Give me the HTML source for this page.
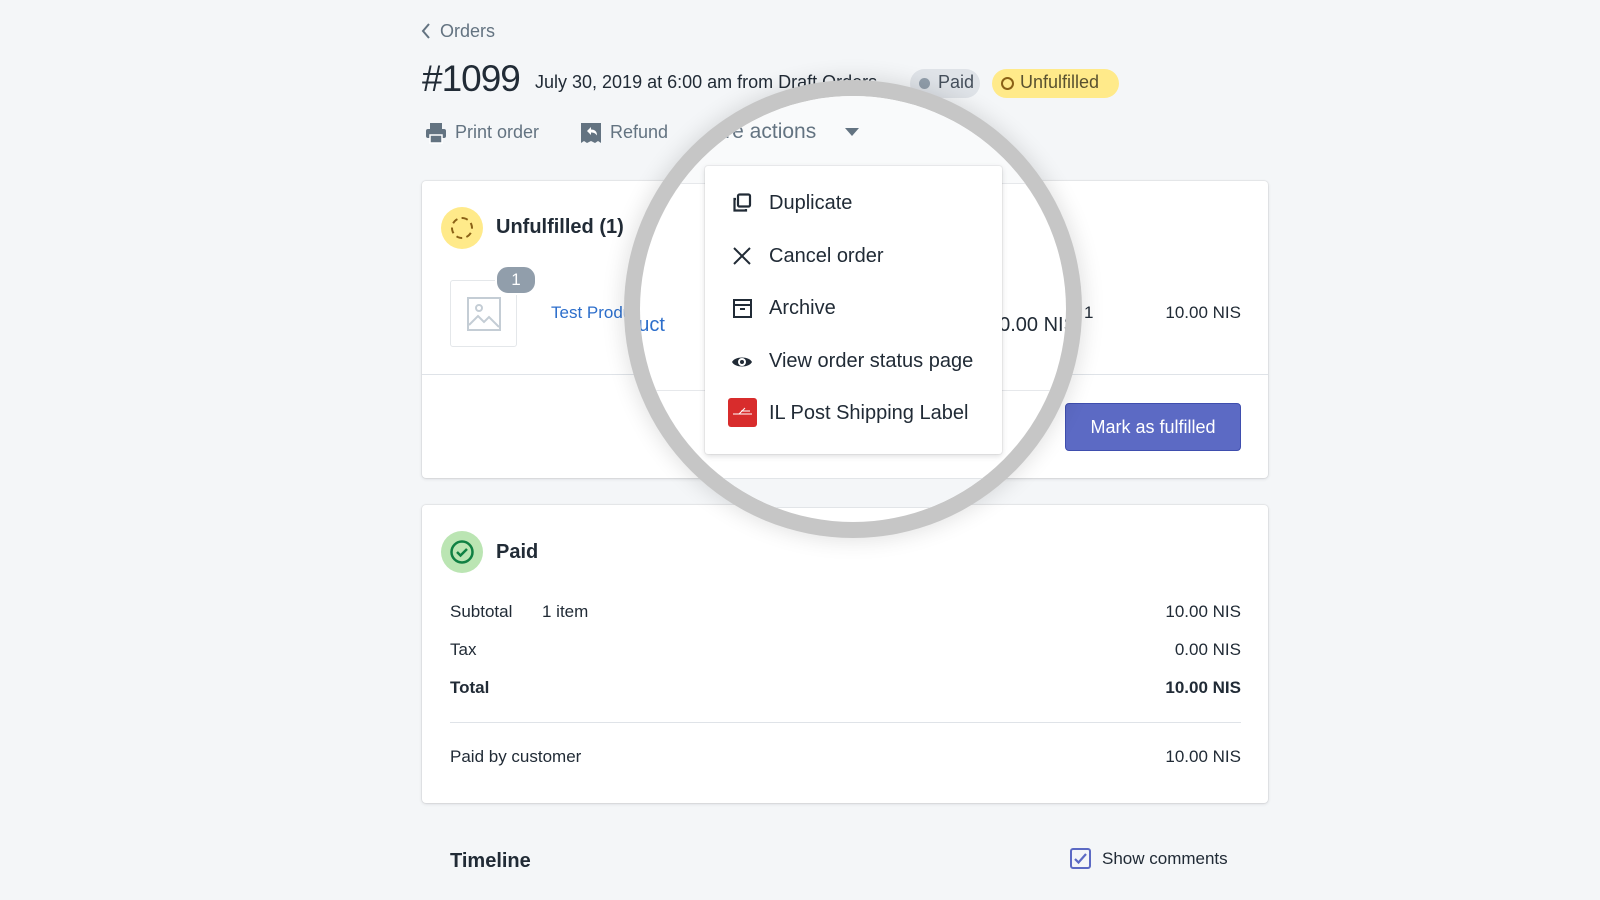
<!DOCTYPE html>
<html><head><meta charset="utf-8"><style>
*{margin:0;padding:0;box-sizing:border-box}
body{width:1600px;height:900px;background:#f4f6f8;font-family:"Liberation Sans",sans-serif;color:#212b36;position:relative;overflow:hidden;font-size:17px}
.a{position:absolute;white-space:nowrap}
.card{position:absolute;left:422px;width:846px;background:#fff;border-radius:4px;box-shadow:0 0 0 1px rgba(63,63,68,.06),0 1px 3px rgba(63,63,68,.15)}
.r{right:359px;text-align:right}
.mag{position:absolute;left:640px;top:96px;width:426px;height:426px;border-radius:50%;overflow:hidden;background:#fff;box-shadow:0 0 0 16px #c6c6c6,0 0 22px 18px rgba(0,0,0,.12)}
.mag .in{position:absolute;left:-640px;top:-96px;width:1600px;height:900px}
.mi{position:absolute;left:769px;font-size:20px;color:#212b36}
</style></head><body>
<svg class="a" style="left:420px;top:22px" width="12" height="18" viewBox="0 0 12 18"><path d="M9 2L3 9l6 7" fill="none" stroke="#637381" stroke-width="2"/></svg>
<div class="a" style="left:440px;top:21px;color:#637381;font-size:18px">Orders</div>
<div class="a" style="left:422px;top:58px;font-size:37px;letter-spacing:-1px">#1099</div>
<div class="a" style="left:535px;top:72px;font-size:18px">July 30, 2019 at 6:00 am from Draft Orders</div>
<div class="a" style="left:910px;top:69px;width:70px;height:29px;border-radius:15px;background:#dfe3e8;color:#454f5b;font-size:18px;padding:3px 0 0 28px">Paid<span style="position:absolute;left:9px;top:9px;width:11px;height:11px;border-radius:50%;background:#919eab"></span></div>
<div class="a" style="left:992px;top:69px;width:127px;height:29px;border-radius:15px;background:#ffea8a;color:#595130;font-size:18px;padding:3px 0 0 28px">Unfulfilled<span style="position:absolute;left:9px;top:8px;width:13px;height:13px;border-radius:50%;border:2px solid #8a6116"></span></div>
<svg class="a" style="left:425px;top:122px" width="22" height="22" viewBox="0 0 22 22"><rect x="5" y="1" width="12" height="6" fill="#637381"/><rect x="1" y="7" width="20" height="9" rx="2" fill="#637381"/><rect x="5" y="13" width="12" height="8" fill="#637381" stroke="#fff" stroke-width="1.5"/></svg>
<div class="a" style="left:455px;top:122px;color:#637381;font-size:18px">Print order</div>
<svg class="a" style="left:580px;top:122px" width="22" height="22" viewBox="0 0 22 22"><path d="M1 1h20v20l-3-2-3 2-4-2-4 2-3-2-3 2z" fill="#637381"/><path d="M7 9l4-4v2.5c4 0 6 2 6 6-1.5-2-3-3-6-3V13z" fill="#fff"/></svg>
<div class="a" style="left:610px;top:122px;color:#637381;font-size:18px">Refund</div>
<div class="card" style="top:181px;height:297px"></div>
<div class="a" style="left:422px;top:374px;width:846px;height:1px;background:#dfe3e8"></div>
<div class="a" style="left:441px;top:207px;width:42px;height:42px;border-radius:50%;background:#ffea8a"></div>
<div class="a" style="left:451px;top:217px;width:22px;height:22px;border-radius:50%;border:2.5px dashed #8a6116"></div>
<div class="a" style="left:496px;top:216px;font-size:20px;font-weight:bold;color:#212b36">Unfulfilled (1)</div>
<div class="a" style="left:450px;top:280px;width:67px;height:67px;border:1px solid #e4e7ea;border-radius:3px"></div>
<svg class="a" style="left:467px;top:297px" width="34" height="34" viewBox="0 0 34 34"><rect x="1" y="1" width="32" height="32" fill="none" stroke="#c4cdd5" stroke-width="2"/><circle cx="12" cy="11" r="3" fill="none" stroke="#c4cdd5" stroke-width="2"/><path d="M2 28l9-9 6 6 5-5 10 10" fill="none" stroke="#c4cdd5" stroke-width="2"/></svg>
<div class="a" style="left:497px;top:267px;width:38px;height:26px;border-radius:13px;background:#919eab;color:#fff;font-size:17px;text-align:center;line-height:26px;border:2px solid #fff;box-sizing:content-box;margin:-2px">1</div>
<div class="a" style="left:551px;top:303px;color:#2c6ecb;font-size:17px">Test Product</div>
<div class="a" style="left:1084px;top:303px">1</div>
<div class="a r" style="top:303px">10.00 NIS</div>
<div class="a" style="left:1065px;top:403px;width:176px;height:48px;border-radius:4px;background:#5c6ac4;border:1px solid #3f4eae;color:#fff;font-size:18px;text-align:center;line-height:46px">Mark as fulfilled</div>
<div class="card" style="top:505px;height:298px"></div>
<div class="a" style="left:441px;top:531px;width:42px;height:42px;border-radius:50%;background:#bbe5b3"></div>
<svg class="a" style="left:449px;top:539px" width="26" height="26" viewBox="0 0 26 26"><circle cx="13" cy="13" r="10.5" fill="none" stroke="#108043" stroke-width="2.5"/><path d="M8 13l3.5 3.5L18 10" fill="none" stroke="#108043" stroke-width="2.5"/></svg>
<div class="a" style="left:496px;top:541px;font-size:20px;font-weight:bold">Paid</div>
<div class="a" style="left:450px;top:602px">Subtotal</div><div class="a" style="left:542px;top:602px">1 item</div><div class="a r" style="top:602px">10.00 NIS</div>
<div class="a" style="left:450px;top:640px">Tax</div><div class="a r" style="top:640px">0.00 NIS</div>
<div class="a" style="left:450px;top:678px;font-weight:bold">Total</div><div class="a r" style="top:678px;font-weight:bold">10.00 NIS</div>
<div class="a" style="left:450px;top:722px;width:791px;height:1px;background:#dfe3e8"></div>
<div class="a" style="left:450px;top:747px">Paid by customer</div><div class="a r" style="top:747px">10.00 NIS</div>
<div class="a" style="left:450px;top:850px;font-size:20px;font-weight:bold">Timeline</div>
<div class="a" style="left:1070px;top:848px;width:21px;height:21px;border:2px solid #5c6ac4;border-radius:3px"></div>
<svg class="a" style="left:1073px;top:851px" width="15" height="15" viewBox="0 0 15 15"><path d="M2 8l3.5 3.5L13 3" fill="none" stroke="#5c6ac4" stroke-width="2.2"/></svg>
<div class="a" style="left:1102px;top:849px">Show comments</div>
<div class="mag"><div class="in">
<div class="a" style="left:600px;top:0;width:600px;height:184px;background:#f9fafb"></div>
<div class="a" style="left:600px;top:183px;width:600px;height:1px;background:#e6e8eb"></div>
<div class="a" style="left:600px;top:390px;width:600px;height:1px;background:#e6e8eb"></div>
<div class="a" style="left:600px;top:478px;width:600px;height:30px;background:#f4f6f8;border-top:1px solid #e2e5e8;border-bottom:1px solid #e2e5e8"></div>
<div class="a" style="left:696px;top:120px;font-size:21px;color:#637381">More actions</div>
<svg class="a" style="left:845px;top:128px" width="14" height="8"><path d="M0 0h14L7 8z" fill="#637381"/></svg>
<div class="a" style="left:596px;top:314px;font-size:20px;color:#2c6ecb">Product</div>
<div class="a" style="left:988px;top:314px;font-size:20px">10.00 NIS</div>
<div class="a" style="left:1083px;top:300px;font-size:18px">1</div>
<div class="a" style="left:1065px;top:403px;width:176px;height:48px;border-radius:4px;background:#5c6ac4"></div>
<div class="a" style="left:705px;top:166px;width:297px;height:288px;background:#fff;border-radius:3px;box-shadow:0 0 0 1px rgba(63,63,68,.06),0 2px 6px rgba(63,63,68,.18)"></div>
<svg class="a" style="left:732px;top:193px" width="20" height="20" viewBox="0 0 20 20"><rect x="6" y="1.5" width="12" height="12" rx="1.5" fill="none" stroke="#212b36" stroke-width="2.2"/><path d="M4 6H2.5v11.5H14V16" fill="none" stroke="#212b36" stroke-width="2.2"/></svg>
<div class="mi" style="top:192px">Duplicate</div>
<svg class="a" style="left:733px;top:247px" width="18" height="18" viewBox="0 0 18 18"><path d="M1 1l16 16M17 1L1 17" stroke="#212b36" stroke-width="2"/></svg>
<div class="mi" style="top:245px">Cancel order</div>
<svg class="a" style="left:733px;top:299px" width="19" height="19" viewBox="0 0 19 19"><rect x="1" y="1" width="17" height="17" fill="none" stroke="#212b36" stroke-width="2"/><path d="M1 6h17M7 10h5" stroke="#212b36" stroke-width="2"/></svg>
<div class="mi" style="top:297px">Archive</div>
<svg class="a" style="left:731px;top:354px" width="22" height="16" viewBox="0 0 22 16"><path d="M1 8C4 2 18 2 21 8 18 14 4 14 1 8z" fill="#212b36"/><circle cx="11" cy="8" r="4" fill="#fff"/><circle cx="11" cy="8" r="2" fill="#212b36"/></svg>
<div class="mi" style="top:350px">View order status page</div>
<div class="a" style="left:728px;top:398px;width:29px;height:29px;border-radius:3px;background:#d82c2c"></div>
<svg class="a" style="left:731px;top:406px" width="23" height="12"><path d="M2 8h19M8 8l6-6M10 5h9" stroke="#fff" stroke-width="1" fill="none"/></svg>
<div class="mi" style="top:402px">IL Post Shipping Label</div>
</div></div>
</body></html>
